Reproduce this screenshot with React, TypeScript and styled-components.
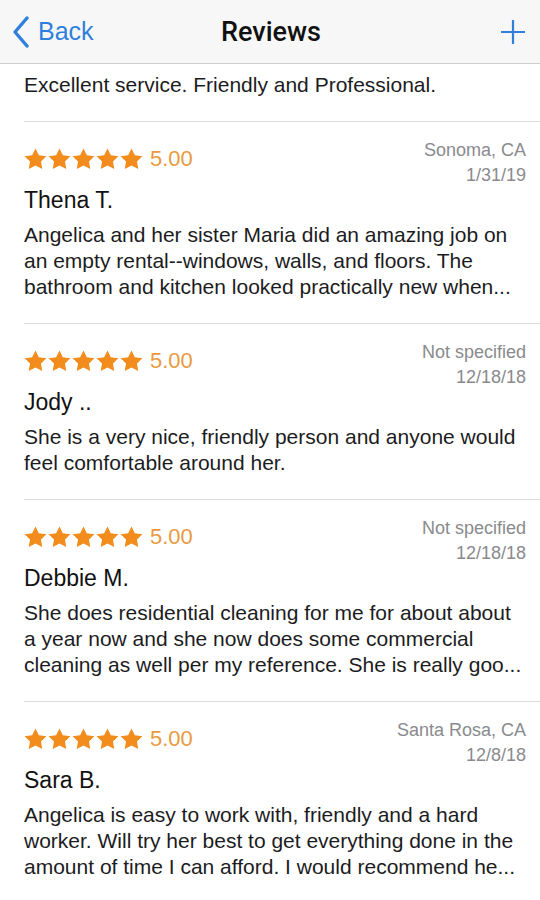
import styled, { createGlobalStyle } from "styled-components";

type Review = {
  rating: string;
  name: string;
  place: string;
  date: string;
  lines: string[];
};

const reviews: Review[] = [
  {
    rating: "5.00",
    name: "Thena T.",
    place: "Sonoma, CA",
    date: "1/31/19",
    lines: [
      "Angelica and her sister Maria did an amazing job on",
      "an empty rental--windows, walls, and floors. The",
      "bathroom and kitchen looked practically new when...",
    ],
  },
  {
    rating: "5.00",
    name: "Jody ..",
    place: "Not specified",
    date: "12/18/18",
    lines: [
      "She is a very nice, friendly person and anyone would",
      "feel comfortable around her.",
    ],
  },
  {
    rating: "5.00",
    name: "Debbie M.",
    place: "Not specified",
    date: "12/18/18",
    lines: [
      "She does residential cleaning for me for about about",
      "a year now and she now does some commercial",
      "cleaning as well per my reference. She is really goo...",
    ],
  },
  {
    rating: "5.00",
    name: "Sara B.",
    place: "Santa Rosa, CA",
    date: "12/8/18",
    lines: [
      "Angelica is easy to work with, friendly and a hard",
      "worker. Will try her best to get everything done in the",
      "amount of time I can afford. I would recommend he...",
    ],
  },
];

const GlobalStyle = createGlobalStyle`
  html, body {
    margin: 0;
    padding: 0;
    background: #ffffff;
  }
  body {
    font-family: "Liberation Sans", Arial, sans-serif;
    color: #1c1c1e;
  }
`;

const Screen = styled.div`
  width: 540px;
  height: 900px;
  overflow: hidden;
  background: #ffffff;
`;

const NavBar = styled.header`
  height: 64px;
  background: #f7f7f7;
  border-bottom: 1px solid #cfcfcf;
  display: grid;
  grid-template-columns: 1fr auto 1fr;
  align-items: center;
  padding: 0 14px 0 12px;
  box-sizing: border-box;
`;

const BackButton = styled.button`
  display: flex;
  align-items: center;
  gap: 8px;
  background: none;
  border: 0;
  padding: 0;
  color: #2f80dc;
  font-family: inherit;
  font-size: 25px;
  justify-self: start;
`;

const Title = styled.h1`
  margin: 0;
  font-family: Roboto, "Liberation Sans", sans-serif;
  font-size: 27px;
  font-weight: 500;
  color: #111;
  padding-left: 4px;
`;

const AddButton = styled.button`
  background: none;
  border: 0;
  padding: 0;
  justify-self: end;
  display: flex;
`;

const List = styled.div`
  padding-left: 24px;
`;

const Intro = styled.p`
  margin: 0;
  font-size: 21px;
  line-height: 26px;
  padding: 8px 0 23px;
  border-bottom: 1px solid #dcdcdc;
`;

const Item = styled.article`
  padding: 16px 14px 23px 0;
  border-bottom: 1px solid #dcdcdc;
`;

const Head = styled.div`
  display: flex;
  justify-content: space-between;
  align-items: flex-start;
`;

const Rating = styled.div`
  display: flex;
  align-items: center;
  margin-top: 8px;
`;

const Stars = styled.div`
  display: flex;
  gap: 1px;
  margin-right: 7px;
`;

const Score = styled.span`
  font-size: 22px;
  color: #e99a3e;
`;

const Meta = styled.div`
  text-align: right;
  font-size: 18px;
  line-height: 25px;
  color: #8a8a8e;
`;

const Name = styled.div`
  font-size: 23px;
  line-height: 24px;
  color: #111;
  margin-bottom: 10px;
`;

const Body = styled.div`
  font-size: 21px;
  line-height: 26px;
  color: #1c1c1e;
`;

const Line = styled.div`
  white-space: nowrap;
`;

const Star = () => (
  <svg width="23" height="22" viewBox="0 0 24 23">
    <path
      d="M12 0.5l3.5 7 7.9 1.1-5.7 5.5 1.4 7.8L12 18.2l-7.1 3.7 1.4-7.8L0.6 8.6l7.9-1.1z"
      fill="#f28c1c"
    />
  </svg>
);

const ReviewItem = ({ review }: { review: Review }) => (
  <Item>
    <Head>
      <Rating>
        <Stars>
          {[0, 1, 2, 3, 4].map((i) => (
            <Star key={i} />
          ))}
        </Stars>
        <Score>{review.rating}</Score>
      </Rating>
      <Meta>
        <div>{review.place}</div>
        <div>{review.date}</div>
      </Meta>
    </Head>
    <Name>{review.name}</Name>
    <Body>
      {review.lines.map((l) => (
        <Line key={l}>{l}</Line>
      ))}
    </Body>
  </Item>
);

const App = () => {
  return (
    <Screen>
      <GlobalStyle />
      <NavBar>
        <BackButton>
          <svg width="18" height="32" viewBox="0 0 18 32">
            <path
              d="M15 2L3 16l12 14"
              fill="none"
              stroke="#2f80dc"
              strokeWidth="3.4"
              strokeLinecap="round"
              strokeLinejoin="round"
            />
          </svg>
          Back
        </BackButton>
        <Title>Reviews</Title>
        <AddButton>
          <svg width="26" height="26" viewBox="0 0 26 26">
            <path d="M13 1v24M1 13h24" stroke="#2f80dc" strokeWidth="2.2" />
          </svg>
        </AddButton>
      </NavBar>
      <List>
        <Intro>Excellent service. Friendly and Professional.</Intro>
        {reviews.map((r) => (
          <ReviewItem key={r.name} review={r} />
        ))}
      </List>
    </Screen>
  );
};

export default App;
